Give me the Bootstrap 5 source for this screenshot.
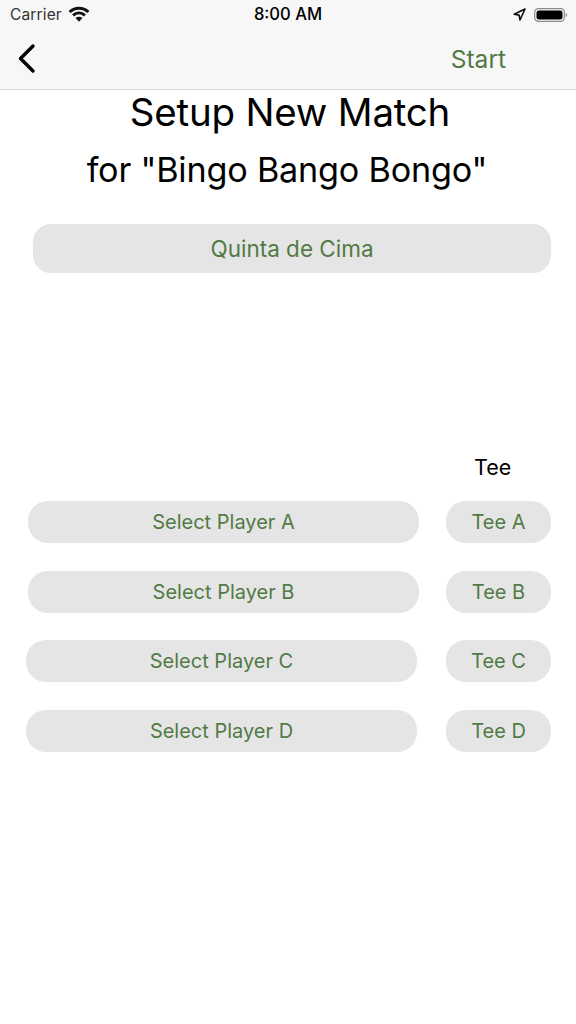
<!DOCTYPE html>
<html lang="en">
<head>
<meta charset="utf-8">
<title>Setup New Match</title>
<link href="https://cdn.jsdelivr.net/npm/bootstrap@5.3.0/dist/css/bootstrap.min.css" rel="stylesheet">
<style>
html,body{background:#fff;}
body{width:576px;height:1024px;overflow:hidden;font-family:Inter,"Liberation Sans",sans-serif;color:#000;}
.top-shell{height:90px;background:#f7f7f7;border-bottom:1px solid #d9d9d9;}
.status-line{height:29px;padding:0 8px 0 10px;font-size:15.5px;line-height:29px;}
.status-carrier{color:#333;letter-spacing:.15px;margin-right:6px;}
.status-time{left:0;right:0;top:0;text-align:center;font-weight:500;font-size:16.6px;line-height:29px;}
.nav-line{height:60px;padding:0 70px 0 17px;}
.start-link{color:#527a45;font-size:24.5px;text-decoration:none;}
.title-main{font-size:38.5px;line-height:44px;font-weight:400;margin:0;padding-left:4px;letter-spacing:-.2px;}
.title-sub{font-size:34.2px;line-height:40px;font-weight:400;margin:16px 0 0;padding-right:2px;letter-spacing:-.2px;}
.pill-btn{background:#e5e5e5;color:#527a45;border:0;border-radius:20px;display:flex;align-items:center;justify-content:center;font-size:20px;padding:0;}
.pill-btn:hover{background:#e5e5e5;color:#527a45;}
.course-pill{width:518px;height:49px;margin:34px 0 0 33px;font-size:22.5px;border-radius:18px;}
.tee-head{margin:179px 0 0 474px;font-size:21.5px;line-height:30px;height:30px;}
.players{margin-top:19px;gap:27.6px;}
.player-row{padding-left:28px;}
.player-row.shifted{padding-left:26px;}
.player-pill{width:391px;height:42px;}
.tee-pill{width:105px;height:42px;margin-left:auto;margin-right:25px;}
</style>
</head>
<body>
<header class="top-shell">
  <div class="status-line d-flex align-items-center justify-content-between position-relative">
    <div class="d-flex align-items-center">
      <span class="status-carrier">Carrier</span>
      <svg width="22" height="17" viewBox="0 0 21 16" aria-hidden="true"><path d="M1.500 5.600C6.800.8 14.200.8 19.500 5.600" fill="none" stroke="#111" stroke-width="2.800"/><path d="M4.800 8.900c3.400-3 8-3 11.400 0" fill="none" stroke="#111" stroke-width="2.800"/><path d="M7.200 11.400c2-1.700 4.600-1.700 6.600 0l-3.300 3.600z" fill="#111"/></svg>
    </div>
    <span class="status-time position-absolute">8:00 AM</span>
    <div class="d-flex align-items-center gap-2">
      <svg width="13" height="13" viewBox="0 0 13 13" aria-hidden="true"><path d="M12 1 1.200 6.200l4.900.9.900 4.900z" fill="none" stroke="#111" stroke-width="1.600" stroke-linejoin="round"/></svg>
      <svg width="34" height="16" viewBox="0 0 34 16" aria-hidden="true"><rect x=".7" y="1.700" width="29.600" height="12.600" rx="3.600" fill="none" stroke="#8a8a8a" stroke-width="1.200"/><rect x="2.500" y="3.500" width="26" height="9" rx="2.200" fill="#000"/><path d="M31.600 6v4c1-.3 1.600-1 1.600-2s-.6-1.700-1.600-2z" fill="#999"/></svg>
    </div>
  </div>
  <nav class="nav-line d-flex align-items-center justify-content-between">
    <svg width="20" height="32" viewBox="0 0 20 32" aria-label="Back"><path d="M16 3 3.500 15.500 16 28" fill="none" stroke="#000" stroke-width="3.400" stroke-linecap="round" stroke-linejoin="round"/></svg>
    <a class="start-link" href="#">Start</a>
  </nav>
</header>
<main>
  <div class="text-center">
    <h1 class="title-main">Setup New Match</h1>
    <h2 class="title-sub">for "Bingo Bango Bongo"</h2>
  </div>
  <button type="button" class="btn pill-btn course-pill">Quinta de Cima</button>
  <div class="tee-head">Tee</div>
  <div class="players d-flex flex-column">
    <div class="player-row d-flex"><button type="button" class="btn pill-btn player-pill">Select Player A</button><button type="button" class="btn pill-btn tee-pill">Tee A</button></div>
    <div class="player-row d-flex"><button type="button" class="btn pill-btn player-pill">Select Player B</button><button type="button" class="btn pill-btn tee-pill">Tee B</button></div>
    <div class="player-row shifted d-flex"><button type="button" class="btn pill-btn player-pill">Select Player C</button><button type="button" class="btn pill-btn tee-pill">Tee C</button></div>
    <div class="player-row shifted d-flex"><button type="button" class="btn pill-btn player-pill">Select Player D</button><button type="button" class="btn pill-btn tee-pill">Tee D</button></div>
  </div>
</main>
<script src="https://cdn.jsdelivr.net/npm/bootstrap@5.3.0/dist/js/bootstrap.bundle.min.js"></script>
</body>
</html>
